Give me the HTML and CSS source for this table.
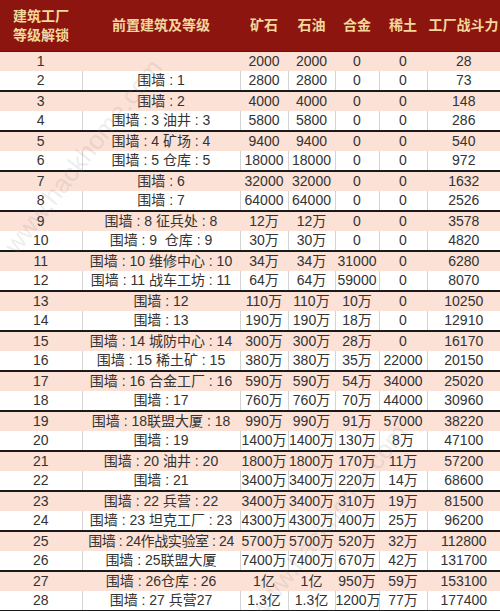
FILE: index.html
```html
<!DOCTYPE html>
<html lang="zh-CN">
<head>
<meta charset="utf-8">
<link rel="stylesheet" href="styles.css">
</head>
<body>
<div class="wrap">
<table class="tbl">
<colgroup>
<col class="c1"><col class="c2"><col class="c3"><col class="c4"><col class="c5"><col class="c6"><col class="c7">
</colgroup>
<thead>
<tr><th>建筑工厂<br>等级解锁</th><th>前置建筑及等级</th><th>矿石</th><th>石油</th><th>合金</th><th>稀土</th><th>工厂战斗力</th></tr>
</thead>
<tbody>
<tr><td>1</td><td></td><td>2000</td><td>2000</td><td>0</td><td>0</td><td>28</td></tr>
<tr><td>2</td><td>围墙 : 1</td><td>2800</td><td>2800</td><td>0</td><td>0</td><td>73</td></tr>
<tr><td>3</td><td>围墙 : 2</td><td>4000</td><td>4000</td><td>0</td><td>0</td><td>148</td></tr>
<tr><td>4</td><td>围墙 : 3 油井 : 3</td><td>5800</td><td>5800</td><td>0</td><td>0</td><td>286</td></tr>
<tr><td>5</td><td>围墙 : 4 矿场 : 4</td><td>9400</td><td>9400</td><td>0</td><td>0</td><td>540</td></tr>
<tr><td>6</td><td>围墙 : 5 仓库 : 5</td><td>18000</td><td>18000</td><td>0</td><td>0</td><td>972</td></tr>
<tr><td>7</td><td>围墙 : 6</td><td>32000</td><td>32000</td><td>0</td><td>0</td><td>1632</td></tr>
<tr><td>8</td><td>围墙 : 7</td><td>64000</td><td>64000</td><td>0</td><td>0</td><td>2526</td></tr>
<tr><td>9</td><td>围墙 : 8 征兵处 : 8</td><td>12万</td><td>12万</td><td>0</td><td>0</td><td>3578</td></tr>
<tr><td>10</td><td>围墙 : 9&nbsp; 仓库 : 9</td><td>30万</td><td>30万</td><td>0</td><td>0</td><td>4820</td></tr>
<tr><td>11</td><td>围墙 : 10 维修中心 : 10</td><td>34万</td><td>34万</td><td>31000</td><td>0</td><td>6280</td></tr>
<tr><td>12</td><td>围墙 : 11 战车工坊 : 11</td><td>64万</td><td>64万</td><td>59000</td><td>0</td><td>8070</td></tr>
<tr><td>13</td><td>围墙 : 12</td><td>110万</td><td>110万</td><td>10万</td><td>0</td><td>10250</td></tr>
<tr><td>14</td><td>围墙 : 13</td><td>190万</td><td>190万</td><td>18万</td><td>0</td><td>12910</td></tr>
<tr><td>15</td><td>围墙 : 14 城防中心 : 14</td><td>300万</td><td>300万</td><td>28万</td><td>0</td><td>16170</td></tr>
<tr><td>16</td><td>围墙 : 15 稀土矿 : 15</td><td>380万</td><td>380万</td><td>35万</td><td>22000</td><td>20150</td></tr>
<tr><td>17</td><td>围墙 : 16 合金工厂 : 16</td><td>590万</td><td>590万</td><td>54万</td><td>34000</td><td>25020</td></tr>
<tr><td>18</td><td>围墙 : 17</td><td>760万</td><td>760万</td><td>70万</td><td>44000</td><td>30960</td></tr>
<tr><td>19</td><td>围墙 : 18联盟大厦 : 18</td><td>990万</td><td>990万</td><td>91万</td><td>57000</td><td>38220</td></tr>
<tr><td>20</td><td>围墙 : 19</td><td>1400万</td><td>1400万</td><td>130万</td><td>8万</td><td>47100</td></tr>
<tr><td>21</td><td>围墙 : 20 油井 : 20</td><td>1800万</td><td>1800万</td><td>170万</td><td>11万</td><td>57200</td></tr>
<tr><td>22</td><td>围墙 : 21</td><td>3400万</td><td>3400万</td><td>220万</td><td>14万</td><td>68600</td></tr>
<tr><td>23</td><td>围墙 : 22 兵营 : 22</td><td>3400万</td><td>3400万</td><td>310万</td><td>19万</td><td>81500</td></tr>
<tr><td>24</td><td>围墙 : 23 坦克工厂 : 23</td><td>4300万</td><td>4300万</td><td>400万</td><td>25万</td><td>96200</td></tr>
<tr><td>25</td><td class="tight">围墙 : 24作战实验室 : 24</td><td>5700万</td><td>5700万</td><td>520万</td><td>32万</td><td>112800</td></tr>
<tr><td>26</td><td>围墙 : 25联盟大厦</td><td>7400万</td><td>7400万</td><td>670万</td><td>42万</td><td>131700</td></tr>
<tr><td>27</td><td>围墙 : 26仓库 : 26</td><td>1亿</td><td>1亿</td><td>950万</td><td>59万</td><td>153100</td></tr>
<tr><td>28</td><td>围墙 : 27 兵营27</td><td>1.3亿</td><td>1.3亿</td><td>1200万</td><td>77万</td><td>177400</td></tr>
</tbody>
</table>
<div class="wm wm1">www.hackhome.com</div>
<div class="wm wm2">www.hackhome.com</div>
</div>
</body>
</html>
```
FILE: styles.css
```css
html, body {
  margin: 0;
  padding: 0;
  background: #ffffff;
}
.wrap {
  position: relative;
  width: 500px;
  height: 611px;
  overflow: hidden;
}
.tbl {
  width: 500px;
  border-collapse: collapse;
  table-layout: fixed;
  font-family: "Liberation Sans", "Noto Sans CJK SC", sans-serif;
  font-size: 14px;
  color: #333333;
}
.c1 { width: 82px; }
.c2 { width: 158px; }
.c3 { width: 48px; }
.c4 { width: 47px; }
.c5 { width: 44px; }
.c6 { width: 48px; }
.c7 { width: 73px; }
.tbl th {
  height: 51px;
  padding: 0;
  background: #8c1510;
  color: #f3d79b;
  font-weight: bold;
  font-size: 14px;
  line-height: 19px;
  text-align: center;
  border-bottom: 1px solid #6e0c08;
  white-space: nowrap;
}
.tbl td {
  height: 19px;
  padding: 0;
  line-height: 19px;
  text-align: center;
  white-space: nowrap;
  overflow: visible;
}
.tbl td.tight {
  letter-spacing: -0.4px;
}
.tbl tbody tr:nth-child(odd) td {
  background: #fbe1d6;
  border-left: 1px solid #fbe1d6;
}
.tbl tbody tr:nth-child(even) td {
  background: #ffffff;
  border-left: 1px solid #d4d4d4;
  border-bottom: 2px solid #1a1a1a;
}
.tbl tbody tr td:first-child {
  border-left: none;
}
.wm {
  position: absolute;
  font-family: "Liberation Sans", sans-serif;
  font-size: 26px;
  color: rgba(120, 120, 120, 0.14);
  white-space: nowrap;
  transform-origin: left center;
  pointer-events: none;
}
.wm1 {
  left: 10px;
  top: 235px;
  transform: rotate(-52deg);
}
.wm2 {
  left: 255px;
  top: 600px;
  transform: rotate(-52deg);
}
```
